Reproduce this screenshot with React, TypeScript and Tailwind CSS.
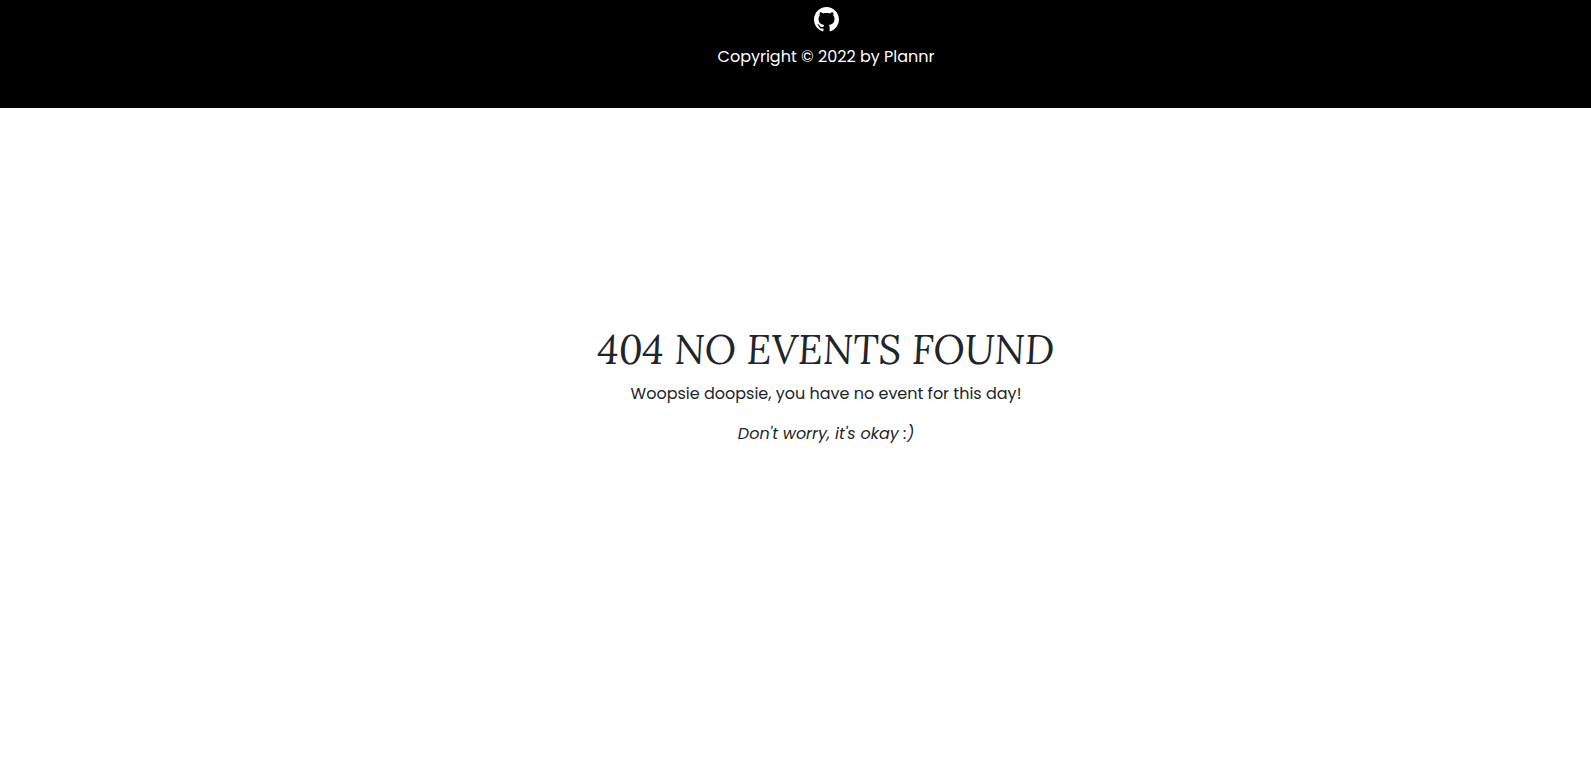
import { BsGithub } from "react-icons/bs";

function Footer() {
  return (
    <footer className="flex flex-col items-center bg-black pt-[7px] pb-[39px] pl-[61px] text-white">
      <a href="#github" aria-label="GitHub">
        <BsGithub className="h-[25px] w-[25px]" />
      </a>
      <p className="mt-[13px]">Copyright © 2022 by Plannr</p>
    </footer>
  );
}

function NoEvents() {
  return (
    <main className="flex flex-col items-center pt-[218px] pl-[61px] text-center text-[#212529]">
      <h1 className="font-['Lora','Liberation_Serif',serif] text-[40px] leading-[48px] italic">
        404 NO EVENTS FOUND
      </h1>
      <p className="mt-2">Woopsie doopsie, you have no event for this day!</p>
      <p className="mt-4 italic">Don't worry, it's okay :)</p>
    </main>
  );
}

export default function App() {
  return (
    <div className="min-h-screen bg-white font-['Poppins','Open_Sans',sans-serif] text-base leading-6">
      <Footer />
      <NoEvents />
    </div>
  );
}
